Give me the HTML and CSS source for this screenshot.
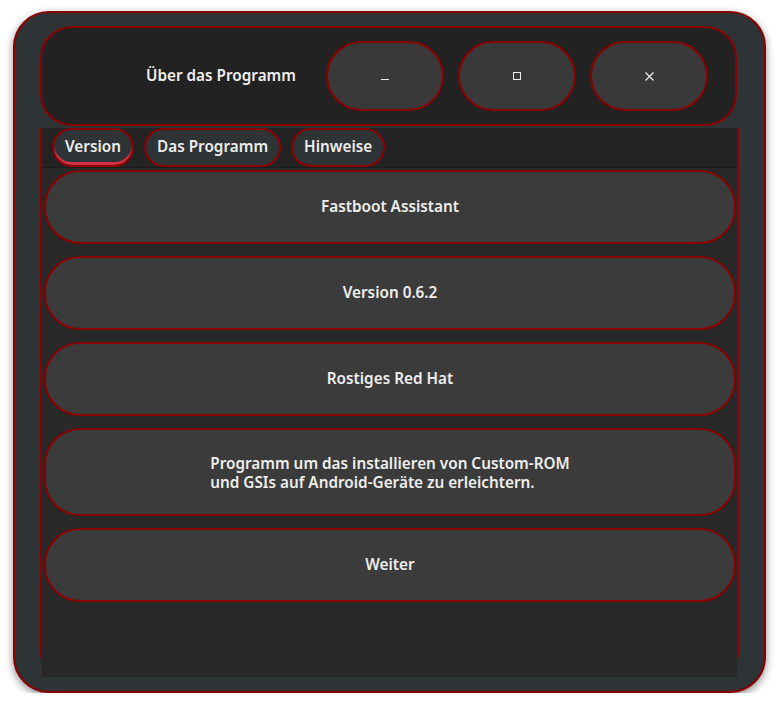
FILE: index.html
```html
<!DOCTYPE html>
<html lang="de">

<head>
    <meta charset="UTF-8">
    <title>Über das Programm</title>
    <link rel="stylesheet" href="styles.css">
</head>

<body>
    <div class="window">
        <header class="headerbar">
            <div class="title">Über das Programm</div>
            <button class="wm-button" type="button" title="Minimieren">
                <svg width="8" height="8" viewBox="0 0 8 8"><path d="M0 7.5h8" stroke="#eeeeec" stroke-width="1"/></svg>
            </button>
            <button class="wm-button" type="button" title="Maximieren">
                <svg width="8" height="8" viewBox="0 0 8 8"><rect x="0.5" y="0.5" width="7" height="7" fill="none" stroke="#eeeeec" stroke-width="1"/></svg>
            </button>
            <button class="wm-button" type="button" title="Schließen">
                <svg width="9" height="9" viewBox="0 0 9 9"><path d="M0.5 0.5l8 8M8.5 0.5l-8 8" stroke="#eeeeec" stroke-width="1.2"/></svg>
            </button>
        </header>

        <div class="notebook">
            <div class="tabs">
                <div class="tab active">Version</div>
                <div class="tab">Das Programm</div>
                <div class="tab">Hinweise</div>
            </div>
            <div class="page">
                <button class="row" type="button">Fastboot Assistant</button>
                <button class="row" type="button">Version 0.6.2</button>
                <button class="row" type="button">Rostiges Red Hat</button>
                <button class="row tall" type="button"><span class="multi">Programm um das installieren von Custom-ROM<br>und GSIs auf Android-Geräte zu erleichtern.</span></button>
                <button class="row" type="button">Weiter</button>
            </div>
        </div>
    </div>
</body>

</html>
```

FILE: styles.css
```css
body {
    background-color: #ffffff;
    margin: 0;
    padding: 0;
    font-family: "Noto Sans", "Open Sans", sans-serif;
    font-weight: 600;
    font-size: 15.3px;
    color: #eeeeec;
}

.window {
    box-sizing: border-box;
    width: 753px;
    height: 682px;
    margin: 11px 0 0 13px;
    padding: 13px 27px 0 25px;
    background-color: #2e3336;
    border: 2px solid #8b0000;
    border-radius: 36px;
    box-shadow: 0 3px 8px rgba(0, 0, 0, 0.45);
    display: flex;
    flex-direction: column;
}

.headerbar {
    box-sizing: border-box;
    height: 100px;
    display: flex;
    align-items: center;
    gap: 14px;
    padding: 0 27px 0 0;
    background-color: #222222;
    border: 2px solid #8b0000;
    border-radius: 32px;
}

.title {
    flex: 1;
    text-align: right;
    margin-right: 16px;
    padding-bottom: 3px;
}

.wm-button {
    box-sizing: border-box;
    width: 118px;
    height: 70px;
    background-color: #393939;
    border: 2px solid #8b0000;
    border-radius: 35px;
    display: flex;
    align-items: center;
    justify-content: center;
    padding: 0;
}

.notebook {
    box-sizing: border-box;
    flex: 1;
    margin: 2px -2px 14px 0;
    border: 2px solid #8b0000;
    border-top: none;
    border-radius: 0 0 24px 24px;
    display: flex;
    flex-direction: column;
}

.tabs {
    height: 39px;
    display: flex;
    gap: 10px;
    padding: 0 0 0 10px;
    background-color: #232323;
    border-bottom: 1px solid #1a1a1a;
}

.tab {
    box-sizing: border-box;
    height: 39px;
    display: flex;
    align-items: center;
    padding: 0 11px 3px;
    background-color: #2e3336;
    border: 2px solid #8b0000;
    border-radius: 20px;
}

.tab.active {
    box-shadow: inset 0 -3px 0 #d0304a;
}

.page {
    flex: 1;
    display: flex;
    flex-direction: column;
    gap: 12px;
    padding: 2px 1px 0 2px;
    margin-bottom: -2px;
    background-color: #282828;
}

.row {
    box-sizing: border-box;
    height: 74px;
    background-color: #3b3b3b;
    border: 2px solid #8b0000;
    border-radius: 36px;
    color: #eeeeec;
    font-family: inherit;
    font-weight: 600;
    font-size: 15.3px;
    padding: 0 0 3px;
}

.row.tall {
    height: 88px;
    padding: 1px 0 0;
}

.multi {
    display: inline-block;
    text-align: left;
    line-height: 19px;
}
```
